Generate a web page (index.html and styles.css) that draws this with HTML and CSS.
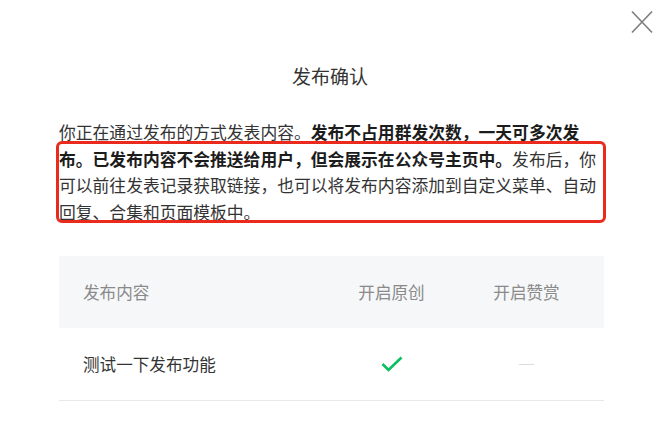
FILE: index.html
```html
<!DOCTYPE html>
<html lang="zh-CN">
<head>
<meta charset="utf-8">
<title>发布确认</title>
<link rel="stylesheet" href="styles.css">
</head>
<body>
<div class="dialog">
  <button class="close" aria-label="关闭">
    <svg width="22" height="24" viewBox="0 0 22 24"><path d="M1 1.5 L21 22.5 M21 1.5 L1 22.5" stroke="#7d7d7d" stroke-width="1.6" fill="none"/></svg>
  </button>
  <h1 class="title">发布确认</h1>
  <div class="content">
    <p class="desc">你正在通过发布的方式发表内容。<strong>发布不占用群发次数，一天可多次发布。已发布内容不会推送给用户，但会展示在公众号主页中。</strong>发布后，你可以前往发表记录获取链接，也可以将发布内容添加到自定义菜单、自动回复、合集和页面模板中。<span class="mark"></span></p>
    <div class="table">
      <div class="row head">
        <div class="cell name">发布内容</div>
        <div class="cell mid">开启原创</div>
        <div class="cell mid">开启赞赏</div>
      </div>
      <div class="row body">
        <div class="cell name">测试一下发布功能</div>
        <div class="cell mid">
          <svg width="22" height="16" viewBox="0 0 22 16"><path d="M1.5 8 L7.5 14 L20.5 1.5" stroke="#07c160" stroke-width="2.6" fill="none"/></svg>
        </div>
        <div class="cell mid"><span class="dash"></span></div>
      </div>
    </div>
  </div>
</div>
</body>
</html>
```

FILE: styles.css
```css
html, body {
  margin: 0;
  padding: 0;
  background: #fff;
}
body {
  font-family: "Noto Sans CJK SC", "Noto Sans", sans-serif;
  color: #353535;
}
.dialog {
  position: relative;
  width: 660px;
  height: 442px;
  overflow: hidden;
  padding-top: 62px;
  box-sizing: border-box;
}
.close {
  position: absolute;
  top: 10px;
  right: 7px;
  width: 22px;
  height: 24px;
  padding: 0;
  border: 0;
  background: none;
  display: flex;
}
.title {
  margin: 0;
  font-size: 19px;
  font-weight: 400;
  line-height: 28px;
  text-align: center;
  color: #333;
}
.content {
  padding: 0 56px 0 59px;
}
.desc {
  position: relative;
  margin: 29px 0 0;
  font-size: 16.8px;
  line-height: 26.5px;
  color: #333;
}
.desc strong {
  font-weight: 700;
  color: #1c1c1c;
}
.mark {
  position: absolute;
  left: -3px;
  top: 22px;
  width: 550px;
  height: 82px;
  box-sizing: border-box;
  border: 3px solid #ea2a1c;
  border-radius: 6px;
  pointer-events: none;
}
.table {
  margin-top: 31px;
  border-bottom: 1px solid #e8e8e8;
}
.row {
  display: grid;
  grid-template-columns: 1fr 135px 135px;
  align-items: center;
  height: 72px;
  padding: 0 10px 0 24px;
  font-size: 16.6px;
}
.head {
  background: #f6f7f9;
  color: #8a8a8a;
}
.body {
  color: #333;
}
.mid {
  display: flex;
  justify-content: center;
  align-items: center;
}
.dash {
  display: block;
  width: 15px;
  height: 1px;
  background: #dcdcdc;
}
```
